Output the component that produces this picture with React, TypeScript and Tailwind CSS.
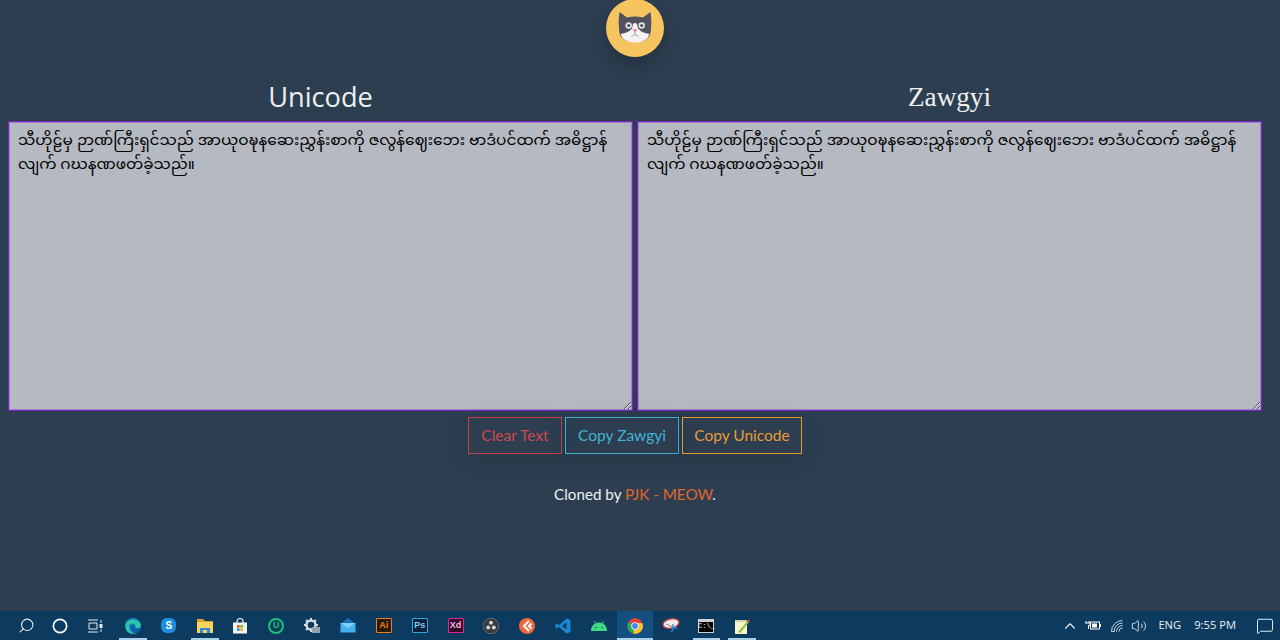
import { ReactNode } from "react"
import { ChevronUp, Circle, MessageSquare, Search, Volume2 } from "lucide-react"

const burmese =
  "သီဟိုဠ်မှ ဉာဏ်ကြီးရှင်သည် အာယုဝဍ္ဎနဆေးညွှန်းစာကို ဇလွန်ဈေးဘေး ဗာဒံပင်ထက် အဓိဋ္ဌာန် လျက် ဂဃနဏဖတ်ခဲ့သည်။"

const CatLogo = () => (
  <svg viewBox="0 0 58 58" className="w-[58px] h-[58px]">
    <circle cx="29" cy="29" r="29" fill="#f6c55f" />
    <path d="M13.5 13 L21 18.5 Q29 16.5 37 18.5 L44.5 13 Q46 22 45 30 Q45 43 29 43 Q13 43 13 30 Q12 22 13.5 13Z" fill="#51515f" />
    <path d="M14.500 35 Q22 34 26 29.500 L27 25 Q29 23 31 25 L32 29.500 Q36 34 43.500 35 Q41 43.500 29 43.500 Q17 43.500 14.500 35Z" fill="#f4f4f6" />
    <circle cx="22.700" cy="26.500" r="3.200" fill="#dfe6e4" />
    <circle cx="35.700" cy="26.500" r="3.200" fill="#dfe6e4" />
    <circle cx="22.700" cy="26.500" r="1.600" fill="#51515f" />
    <circle cx="35.700" cy="26.500" r="1.600" fill="#51515f" />
    <path d="M26.800 30.500h4.400l-2.200 2.800z" fill="#f0616d" />
    <path d="M29 33v2M25.500 37.500q3.500-3.500 7 0" stroke="#8a8a96" strokeWidth="0.800" fill="none" />
  </svg>
)

const Panel = ({ title, font }: { title: string; font: string }) => (
  <div className="flex-1 flex flex-col items-center min-w-0">
    <h2 className={`h-[48px] text-[27.2px] leading-[48px] text-[#ecf0f1] ${font}`}>{title}</h2>
    <textarea
      defaultValue={burmese}
      className="block w-full h-[290px] px-[9px] py-[8px] bg-[#b5b9c1] border border-[#7a22c4] shadow-[inset_0_0_0_1px_rgba(122,34,196,0.35)] text-black text-[15.3px] leading-[24px] outline-none font-['Noto_Sans_Myanmar','Padauk','Noto_Sans',sans-serif]"
    />
  </div>
)

const ActionButton = ({ label, color }: { label: string; color: string }) => (
  <button className={`h-[37px] border text-[15.5px] font-['Lato',sans-serif] shadow-[0_4px_24px_rgba(0,0,0,0.12)] ${color}`}>
    {label}
  </button>
)

const TaskItem = ({ children, open, active }: { children: ReactNode; open?: boolean; active?: boolean }) => (
  <div className={`relative w-[35.85px] h-full flex items-center justify-center ${active ? "bg-[#134f80]" : ""}`}>
    {children}
    {open && <div className={`absolute bottom-0 h-[2px] bg-[#a9cfe9] ${active ? "left-0 right-0" : "left-[4px] right-[4px]"}`} />}
  </div>
)

const Edge = () => (
  <svg viewBox="0 0 18 18" className="w-[18px] h-[18px]">
    <circle cx="9" cy="9" r="8" fill="#1a86c9" />
    <path d="M1.500 8C3 2 14 0 16.800 8c.4 3-3 4-5.500 3 1-3-1-5-4-4.500C5 7 4 10 6 13c1.500 2 3.500 3 6 3-5 2.500-11-1-10.500-8z" fill="#2fc6a5" />
    <path d="M7 8.500c2-2 4.500-1 4.300 2.500 2 1 5 .5 5.500-2 .6 4-2.300 7-4.800 7.500C8 16.500 5 12 7 8.500z" fill="#0f5fa8" />
  </svg>
)

const Skype = () => (
  <div className="w-[15px] h-[15px] rounded-[6px] bg-[#1c8fe3] flex items-center justify-center text-white text-[10px] font-bold font-['Liberation_Sans',sans-serif]">
    S
  </div>
)

const Folder = () => (
  <svg viewBox="0 0 18 16" className="w-[18px] h-[16px]">
    <path d="M1 1h6l2 2h8v3H1z" fill="#e0a526" />
    <rect x="1" y="4" width="16" height="11" fill="#f8d45c" />
    <rect x="4" y="10" width="10" height="5" fill="#2d8ad8" />
    <rect x="7" y="12" width="4" height="3" fill="#f8d45c" />
  </svg>
)

const Store = () => (
  <svg viewBox="0 0 16 16" className="w-[16px] h-[16px]">
    <path d="M5 5V3.500a3 3 0 0 1 6 0V5" stroke="#f0f0f0" strokeWidth="1.200" fill="none" />
    <rect x="1" y="4.500" width="14" height="11" fill="#f2f2f2" />
    <rect x="5" y="7" width="2.700" height="2.700" fill="#e8502c" />
    <rect x="8.300" y="7" width="2.700" height="2.700" fill="#7db92a" />
    <rect x="5" y="10.300" width="2.700" height="2.700" fill="#2c9ee8" />
    <rect x="8.300" y="10.300" width="2.700" height="2.700" fill="#f7b71c" />
  </svg>
)

const Upwork = () => (
  <div className="w-[16px] h-[16px] rounded-full border-2 border-[#1dbf73] flex items-center justify-center text-[#1dbf73] text-[9px] font-bold font-['Liberation_Sans',sans-serif]">
    U
  </div>
)

const Gear = () => (
  <svg viewBox="0 0 18 18" className="w-[18px] h-[18px]">
    <circle cx="8" cy="8" r="4.500" fill="none" stroke="#d8dadc" strokeWidth="2.500" />
    <path d="M8 1v2.500M8 12.500V15M1 8h2.500M12.500 8H15M3 3l1.800 1.800M11.200 11.200L13 13M13 3l-1.800 1.800M4.800 11.200L3 13" stroke="#d8dadc" strokeWidth="2" />
    <rect x="9" y="10" width="8" height="6" fill="#8fa2ad" />
  </svg>
)

const Mail = () => (
  <svg viewBox="0 0 16 15" className="w-[16px] h-[15px]">
    <path d="M1 5.500 8 0l7 5.500z" fill="#1f6fb8" />
    <rect x="0.500" y="5" width="15" height="9.500" fill="#45b0ee" />
    <path d="M.5 5 8 10l7.500-5" fill="#7fd0f7" />
  </svg>
)

const AppTile = ({ label, border, text, bg }: { label: string; border: string; text: string; bg: string }) => (
  <div className={`w-[16px] h-[15px] border rounded-[1px] flex items-center justify-center text-[9px] leading-none font-semibold font-['Liberation_Sans',sans-serif] ${border} ${text} ${bg}`}>
    {label}
  </div>
)

const Obs = () => (
  <svg viewBox="0 0 16 16" className="w-[16px] h-[16px]">
    <circle cx="8" cy="8" r="7.800" fill="#3a3a3c" stroke="#8b8b8b" strokeWidth="0.600" />
    <circle cx="8" cy="4.800" r="2" fill="#d4d4d4" />
    <circle cx="5.200" cy="9.600" r="2" fill="#d4d4d4" />
    <circle cx="10.800" cy="9.600" r="2" fill="#d4d4d4" />
    <circle cx="8" cy="8" r="1.300" fill="#3a3a3c" />
  </svg>
)

const OrangeApp = () => (
  <svg viewBox="0 0 16 16" className="w-[16px] h-[16px]">
    <circle cx="8" cy="8" r="8" fill="#f0683a" />
    <path d="M10 3 5 8l5 5M12.500 5.500 10 8l2.500 2.500" stroke="#fff" strokeWidth="2" fill="none" />
  </svg>
)

const VsCode = () => (
  <svg viewBox="0 0 16 16" className="w-[16px] h-[16px]">
    <path d="M11.500.5 15.500 2v12l-4 1.500L4 8.800l-2.300 1.800L.5 10V6l1.200-.6L4 7.200z" fill="#1c88d4" />
    <path d="M11.500 4.500v7L7 8z" fill="#0f3a5c" />
  </svg>
)

const Android = () => (
  <svg viewBox="0 0 18 12" className="w-[18px] h-[12px]">
    <path d="M1 11C1 6 4.500 2.500 9 2.500S17 6 17 11z" fill="#3ddc84" />
    <path d="M4.500 1l1.800 3M13.500 1l-1.800 3" stroke="#3ddc84" strokeWidth="0.900" />
    <circle cx="5.800" cy="7.500" r="0.700" fill="#0f3a5c" />
    <circle cx="12.200" cy="7.500" r="0.700" fill="#0f3a5c" />
  </svg>
)

const Chrome = () => (
  <svg viewBox="0 0 16 16" className="w-[16px] h-[16px]">
    <path d="M8 8 1.500 4A7.800 7.800 0 0 1 15.300 5H8z" fill="#e34234" />
    <path d="M8 8 1.500 4A7.800 7.800 0 0 0 6 15.600z" fill="#35a853" />
    <path d="M8 8 6 15.600A7.800 7.800 0 0 0 15.300 5H8z" fill="#fbc02d" />
    <circle cx="8" cy="8" r="3.700" fill="#fff" />
    <circle cx="8" cy="8" r="2.900" fill="#4285f4" />
  </svg>
)

const Snip = () => (
  <svg viewBox="0 0 18 16" className="w-[18px] h-[16px]">
    <ellipse cx="9" cy="5.500" rx="8" ry="4.500" transform="rotate(-12 9 5.500)" fill="#f1eeee" stroke="#d8464b" strokeWidth="1.300" />
    <path d="M4 6l7 3" stroke="#777" strokeWidth="0.800" />
    <path d="M11 6v5c0 2-1.500 2.500-2.500 2M11 9.500c2 0 4 0 4 1.500" stroke="#2490dc" strokeWidth="1.300" fill="none" />
  </svg>
)

const Cmd = () => (
  <div className="w-[16px] h-[14px] bg-black border border-[#cfcfcf] border-t-[3px] flex items-center justify-center text-white text-[7px] leading-none font-['Liberation_Mono',monospace]">
    C:\_
  </div>
)

const Notepad = () => (
  <svg viewBox="0 0 16 16" className="w-[16px] h-[16px]">
    <rect x="1" y="2" width="12" height="14" fill="#f8f4c9" />
    <path d="M1 2h12v2H1z" fill="#cfd7a8" />
    <path d="M4 14 13.500 3l1.500 1.300L6 15z" fill="#8cc63f" />
    <path d="M13.500 3 15 1l1 1.500-1 1.800z" fill="#d2453c" />
  </svg>
)

const Battery = () => (
  <svg viewBox="0 0 16 11" className="w-[16px] h-[11px]">
    <path d="M1 1v2M4 1v2M0 3h5v2.500H3.500V9" stroke="#fff" fill="none" />
    <rect x="5.500" y="2" width="9" height="7" fill="none" stroke="#fff" />
    <rect x="7" y="3.500" width="5" height="4" fill="#fff" />
    <rect x="15" y="4" width="1" height="3" fill="#fff" />
  </svg>
)

const Wifi = () => (
  <svg viewBox="0 0 14 12" className="w-[14px] h-[12px]">
    <path d="M.5 11.500a11 11 0 0 1 11-11M3 11.500a8.500 8.500 0 0 1 8.500-8.500M5.500 11.500a6 6 0 0 1 6-6M8 11.500a3.500 3.500 0 0 1 3.500-3.500" stroke="#dfe8ee" strokeWidth="0.900" fill="none" />
    <path d="M.5 11.500 4 12" stroke="#dfe8ee" />
  </svg>
)

export default function App() {
  return (
    <div className="h-[640px] w-[1280px] bg-[#2c3e50] flex flex-col overflow-hidden">
      <div className="flex-1 w-[1270px] px-[8px]">
        <div className="flex justify-center">
          <div className="rounded-full shadow-[0_8px_16px_rgba(0,0,0,0.2)] mt-[-1px]">
            <CatLogo />
          </div>
        </div>
        <div className="flex gap-[4px] mt-[16px]">
          <Panel title="Unicode" font="font-['Open_Sans',sans-serif]" />
          <Panel title="Zawgyi" font="font-['Liberation_Serif',serif]" />
        </div>
        <div className="flex justify-center gap-[3px] mt-[6px]">
          <div className="grid grid-cols-[94px_114px_120px] gap-[3px]">
            <ActionButton label="Clear Text" color="border-[#c0434c] text-[#cd4a52]" />
            <ActionButton label="Copy Zawgyi" color="border-[#3fb1d0] text-[#42b3d6]" />
            <ActionButton label="Copy Unicode" color="border-[#e39b36] text-[#e69c39]" />
          </div>
        </div>
        <p className="mt-[30px] text-center text-[15.2px] leading-[20px] text-[#ecf0f1] font-['Lato',sans-serif]">
          Cloned by <span className="text-[#e2662a]">PJK - MEOW</span>.
        </p>
      </div>
      <div className="h-[29px] bg-[#0d3b60] flex items-center">
        <div className="w-[43px] flex justify-center pl-[9px]">
          <Search className="w-[17px] h-[17px] text-[#e4e9ed] -scale-x-100" strokeWidth={1.5} />
        </div>
        <div className="w-[34px] flex justify-center">
          <Circle className="w-[16px] h-[16px] text-white" strokeWidth={2.500} />
        </div>
        <div className="w-[36px] flex justify-center">
          <svg viewBox="0 0 16 14" className="w-[16px] h-[14px]">
            <path d="M1 1h10M1 13h10M2 4h8v6H2z" stroke="#e4e9ed" fill="none" />
            <path d="M14 1v3M14 10v3" stroke="#e4e9ed" />
            <rect x="12.500" y="5" width="3" height="4" fill="#e4e9ed" />
          </svg>
        </div>
        <div className="h-full flex ml-[2px]">
          <TaskItem open><Edge /></TaskItem>
          <TaskItem><Skype /></TaskItem>
          <TaskItem open><Folder /></TaskItem>
          <TaskItem><Store /></TaskItem>
          <TaskItem><Upwork /></TaskItem>
          <TaskItem><Gear /></TaskItem>
          <TaskItem><Mail /></TaskItem>
          <TaskItem><AppTile label="Ai" border="border-[#e8811a]" text="text-[#e8811a]" bg="bg-[#2a1a08]" /></TaskItem>
          <TaskItem><AppTile label="Ps" border="border-[#2fa8e0]" text="text-[#7cd0f5]" bg="bg-[#0a2238]" /></TaskItem>
          <TaskItem><AppTile label="Xd" border="border-[#e0259a]" text="text-[#f7b6dd]" bg="bg-[#300a28]" /></TaskItem>
          <TaskItem><Obs /></TaskItem>
          <TaskItem><OrangeApp /></TaskItem>
          <TaskItem><VsCode /></TaskItem>
          <TaskItem><Android /></TaskItem>
          <TaskItem open active><Chrome /></TaskItem>
          <TaskItem><Snip /></TaskItem>
          <TaskItem open><Cmd /></TaskItem>
          <TaskItem open><Notepad /></TaskItem>
        </div>
        <div className="flex-1" />
        <div className="flex items-center text-[#e8eef2] text-[11.2px] font-['Open_Sans',sans-serif]">
          <ChevronUp className="w-[18px] h-[18px] mr-[6px]" strokeWidth={1.500} />
          <Battery />
          <span className="w-[10px]" />
          <Wifi />
          <Volume2 className="w-[16px] h-[16px] ml-[6px]" strokeWidth={1.300} />
          <span className="ml-[11px]">ENG</span>
          <span className="ml-[13px]">9:55 PM</span>
          <MessageSquare className="w-[18px] h-[18px] ml-[20px] mr-[6px]" strokeWidth={1.300} />
        </div>
      </div>
    </div>
  )
}
